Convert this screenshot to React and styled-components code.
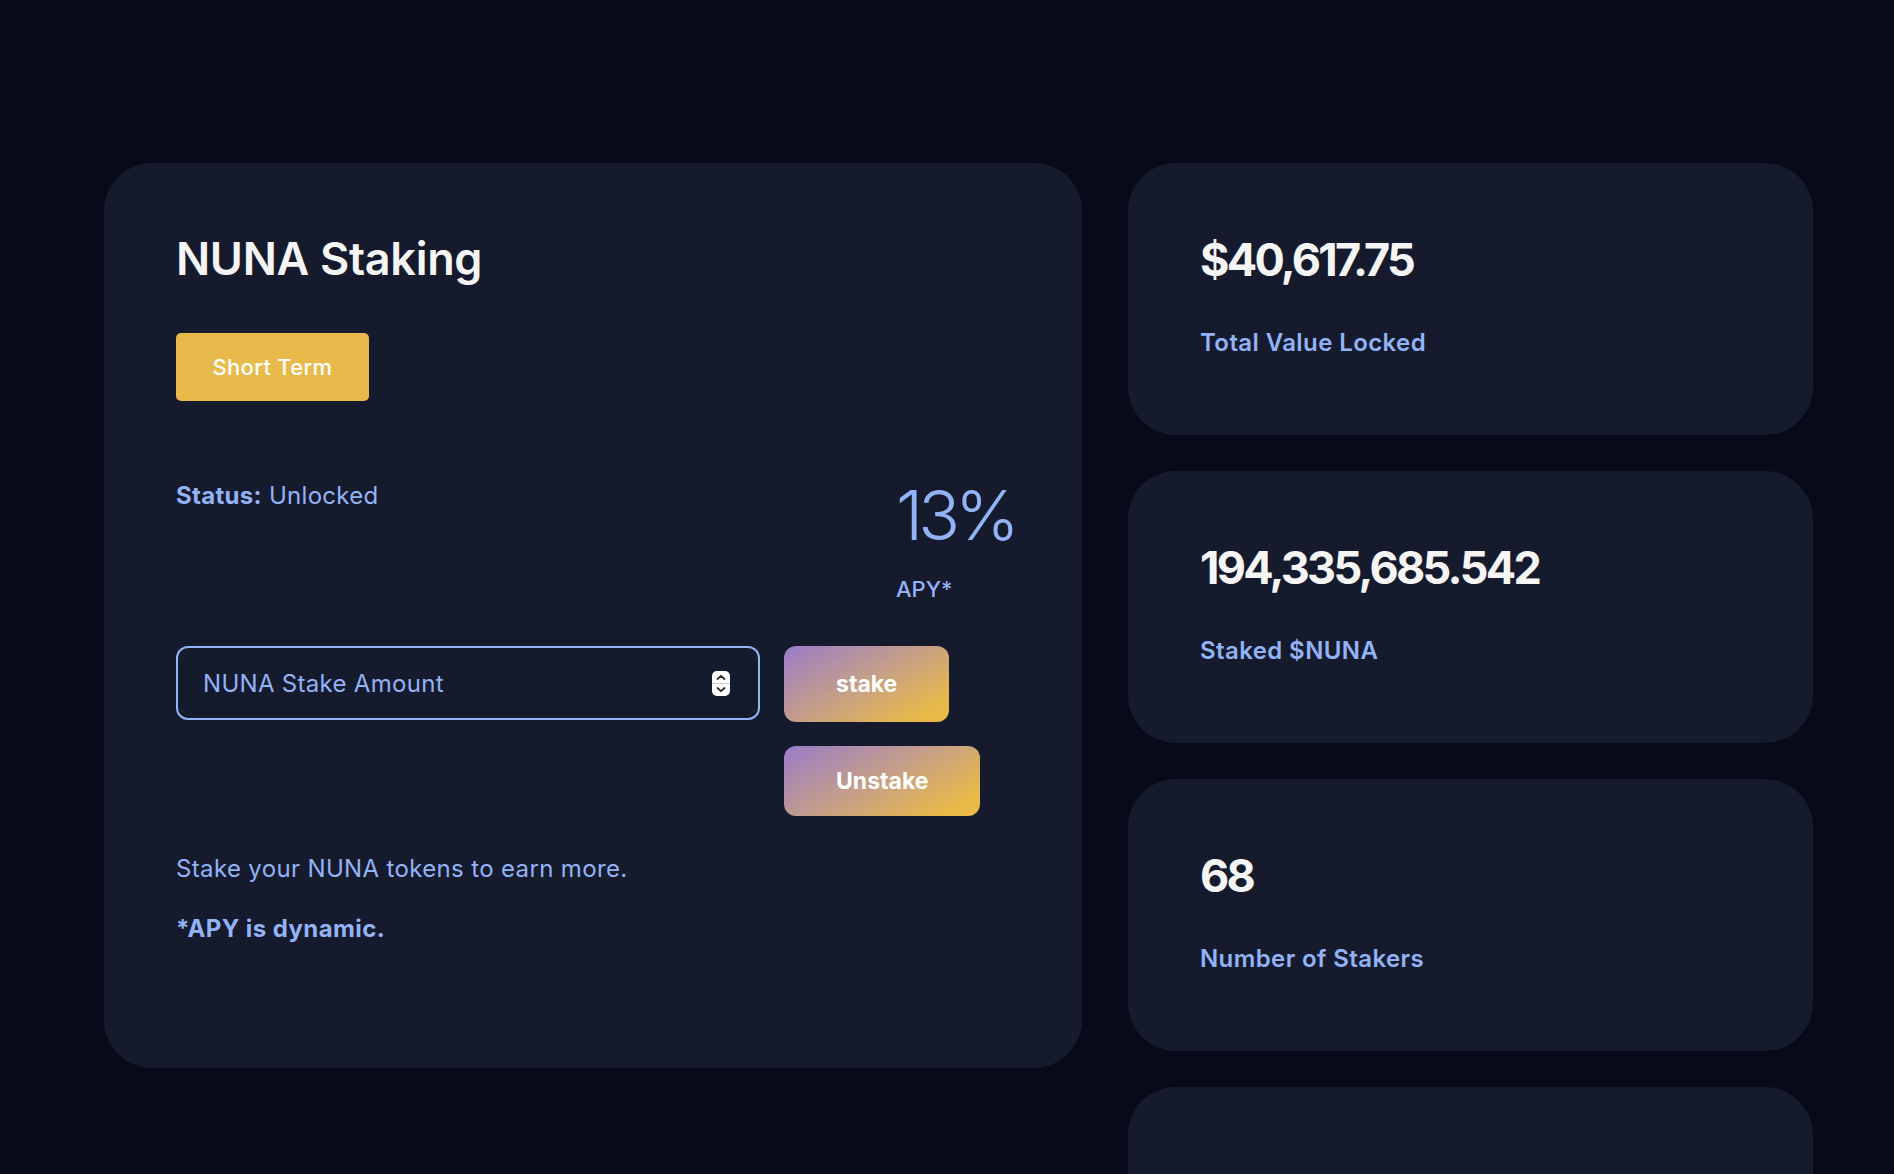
import React from "react";
import styled, { createGlobalStyle } from "styled-components";

const Global = createGlobalStyle`
  html { scrollbar-width: none; }
  html::-webkit-scrollbar { display: none; }
  body {
    margin: 0;
    background: #070a19;
    font-family: "Inter", "Open Sans", sans-serif;
    color: #f5f5f5;
  }
  * { box-sizing: border-box; }
`;

const Page = styled.div`
  display: grid;
  grid-template-columns: 978px 685px;
  column-gap: 46px;
  align-items: start;
  padding: 163px 0 0 104px;
  min-height: 1174px;
`;

const Card = styled.section`
  background: #161a2d;
  border-radius: 48px;
  padding: 68px 72px 122px;
  display: flex;
  flex-direction: column;
  align-items: flex-start;
`;

const Title = styled.h1`
  margin: 0;
  font-size: 45px;
  line-height: 56px;
  font-weight: 600;
  letter-spacing: -0.3px;
  color: #f5f5f5;
`;

const TermButton = styled.button`
  margin-top: 46px;
  height: 68px;
  width: 193px;
  border: none;
  border-radius: 5px;
  background: #e8ba4b;
  color: #ffffff;
  font-family: inherit;
  font-size: 22px;
  font-weight: 500;
  letter-spacing: 0.3px;
  cursor: pointer;
`;

const StatusRow = styled.div`
  margin-top: 78px;
  width: 100%;
  display: flex;
  justify-content: space-between;
  align-items: flex-start;
`;

const Status = styled.p`
  margin: 0;
  font-size: 24px;
  line-height: 34.5px;
  letter-spacing: 0.3px;
  color: #93b3f7;
  font-weight: 400;
  b { font-weight: 700; }
`;

const ApyBlock = styled.div`
  width: 114px;
  display: flex;
  flex-direction: column;
`;

const ApyValue = styled.div`
  font-size: 69px;
  line-height: 72px;
  font-weight: 300;
  letter-spacing: -5px;
  white-space: nowrap;
  color: #93b3f7;
`;

const ApyLabel = styled.div`
  margin-top: 22px;
  font-size: 22px;
  line-height: 33px;
  font-weight: 500;
  color: #93b3f7;
`;

const ActionGrid = styled.div`
  margin-top: 40px;
  display: grid;
  grid-template-columns: 584px auto;
  column-gap: 24px;
  row-gap: 24px;
  justify-items: start;
`;

const AmountBox = styled.label`
  height: 74px;
  width: 584px;
  border: 2px solid #93b3f7;
  border-radius: 12px;
  display: flex;
  align-items: center;
  padding: 0 28px 0 23px;
  gap: 12px;
`;

const AmountInput = styled.input`
  flex: 1;
  min-width: 0;
  background: transparent;
  border: none;
  outline: none;
  font-family: inherit;
  font-size: 24px;
  letter-spacing: 0.3px;
  color: #93b3f7;
  &::placeholder { color: #93b3f7; opacity: 1; }
`;

const GradientButton = styled.button`
  grid-column: 2;
  height: ${(p) => p.$h}px;
  padding: 0 52px;
  border: none;
  border-radius: 12px;
  background: linear-gradient(150deg, #9a7cc8 0%, #c39d8c 45%, #e9ba48 88%);
  color: #ffffff;
  font-family: inherit;
  font-size: 23px;
  font-weight: 700;
  letter-spacing: 0;
  cursor: pointer;
`;

const Description = styled.p`
  margin: 36px 0 0;
  font-size: 24px;
  line-height: 34.5px;
  letter-spacing: 0.35px;
  color: #93b3f7;
  font-weight: 400;
`;

const Note = styled.p`
  margin: 25px 0 0;
  font-size: 24px;
  line-height: 34.5px;
  letter-spacing: 0.4px;
  color: #93b3f7;
  font-weight: 700;
`;

const StatsColumn = styled.div`
  display: flex;
  flex-direction: column;
  gap: 36px;
`;

const StatCard = styled.div`
  height: 272px;
  background: #161a2d;
  border-radius: 48px;
  padding: 69px 72px 0;
`;

const StatValue = styled.div`
  font-size: 45px;
  line-height: 56px;
  font-weight: 700;
  letter-spacing: -2.7px;
  color: #f5f5f5;
`;

const StatLabel = styled.div`
  margin-top: 38px;
  font-size: 24px;
  line-height: 34.5px;
  font-weight: 600;
  letter-spacing: 0.4px;
  color: #93b3f7;
`;

const Spinner = () => (
  <svg width="18" height="25" viewBox="0 0 18 25" aria-hidden="true">
    <rect x="0" y="0" width="18" height="25" rx="5" fill="#ffffff" />
    <line x1="0" y1="12.5" x2="18" y2="12.5" stroke="#d0d0d4" strokeWidth="1" />
    <path d="M5.5 8 L9 4.8 L12.5 8" fill="none" stroke="#2a2a2e" strokeWidth="1.8" strokeLinecap="round" strokeLinejoin="round" />
    <path d="M5.5 17 L9 20.2 L12.5 17" fill="none" stroke="#2a2a2e" strokeWidth="1.8" strokeLinecap="round" strokeLinejoin="round" />
  </svg>
);

const stats = [
  { value: "$40,617.75", label: "Total Value Locked" },
  { value: "194,335,685.542", label: "Staked $NUNA" },
  { value: "68", label: "Number of Stakers" },
  { value: "", label: "" },
];

export default function App() {
  return (
    <>
      <Global />
      <Page>
        <Card>
          <Title>NUNA Staking</Title>
          <TermButton>Short Term</TermButton>
          <StatusRow>
            <Status>
              <b>Status:</b> Unlocked
            </Status>
            <ApyBlock>
              <ApyValue>13%</ApyValue>
              <ApyLabel>APY*</ApyLabel>
            </ApyBlock>
          </StatusRow>
          <ActionGrid>
            <AmountBox>
              <AmountInput type="text" placeholder="NUNA Stake Amount" />
              <Spinner />
            </AmountBox>
            <GradientButton $h={76}>stake</GradientButton>
            <GradientButton $h={70}>Unstake</GradientButton>
          </ActionGrid>
          <Description>Stake your NUNA tokens to earn more.</Description>
          <Note>*APY is dynamic.</Note>
        </Card>
        <StatsColumn>
          {stats.map((s, i) => (
            <StatCard key={i}>
              {s.value && <StatValue>{s.value}</StatValue>}
              {s.label && <StatLabel>{s.label}</StatLabel>}
            </StatCard>
          ))}
        </StatsColumn>
      </Page>
    </>
  );
}
